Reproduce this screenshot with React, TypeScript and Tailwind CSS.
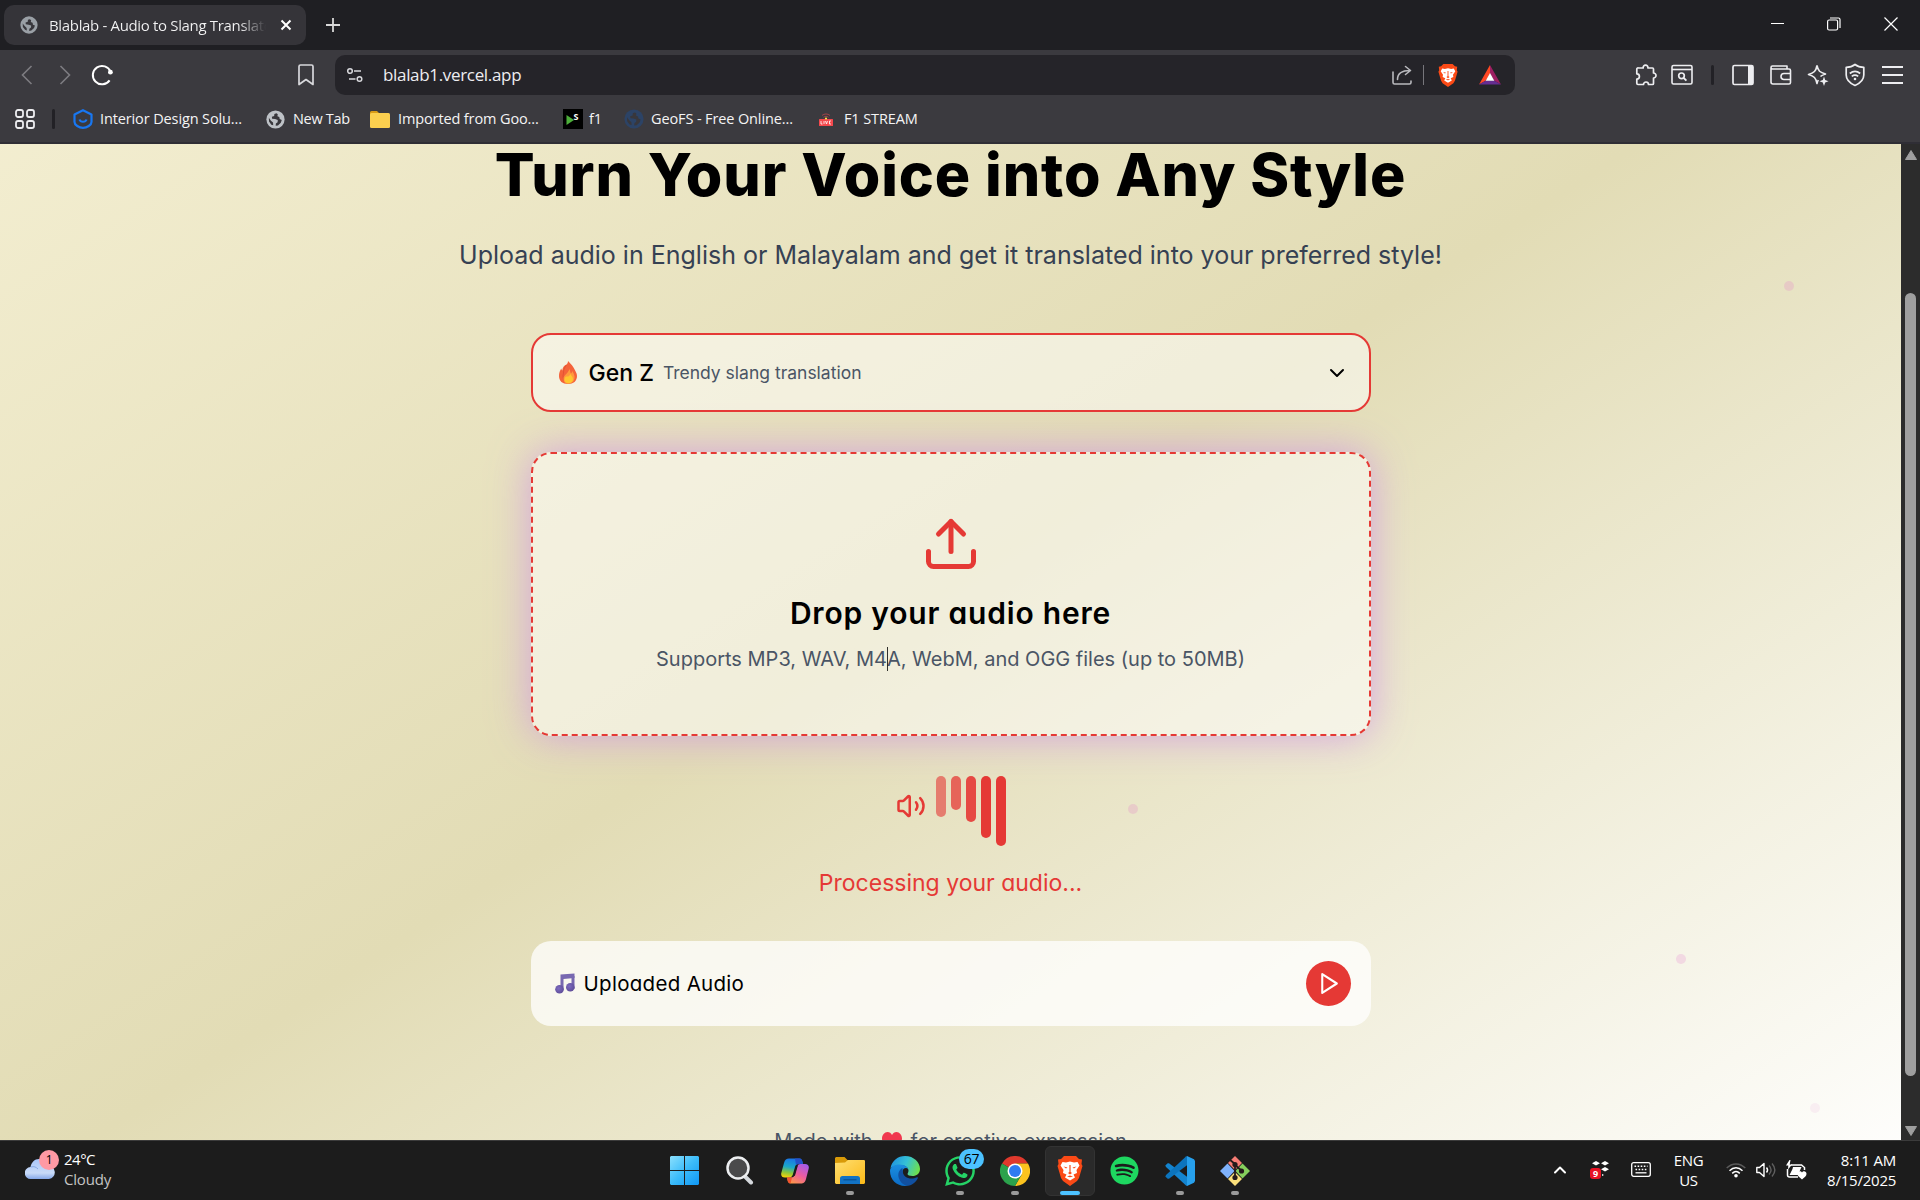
import React from 'react';
import { ChevronDown, ChevronUp, Upload, Volume2 } from 'lucide-react';
import { FaSpotify, FaWhatsapp } from 'react-icons/fa';

type IconProps = { className?: string };

const Globe = ({ className }: IconProps) => (
  <svg viewBox="0 0 20 20" className={className}>
    <circle cx="10" cy="10" r="9.6" fill="currentColor" />
    <path
      d="M11 3.5 8.8 4.2 8.6 6.4 6.2 7.2 6.4 9.2 9.6 9.6 12.4 10.6 12.2 12.8 10.4 14.2 10.2 16.6 12.6 16.2 15.6 13.4 16.6 10.6 14.4 9.6 14 7.4 12 6.6 12.4 4.6ZM3 8.2 3.2 12.2 5.6 15.4 7.6 16 7.4 13.2 5.2 11.2Z"
      fill="#38373c"
    />
  </svg>
);

const BraveLion = ({ className }: IconProps) => (
  <svg viewBox="0 0 26 30" className={className}>
    <path d="M7 0H19L22 3 25 3.500 24.500 8 25.500 10 22 22 20 25 13 30 6 25 4 22 .500 10 1.500 8 1 3.500 4 3Z" fill="#fb4a16" />
    <path d="M5.500 6 9 6.500 13 5.500 17 6.500 20.500 6 22.500 9.500 19.500 14 20 17 16.500 18.500 18 21.500 13 24.500 8 21.500 9.500 18.500 6 17 6.500 14 3.500 9.500Z" fill="#fff" />
    <path d="M6.500 10.500 10.500 11.500 9 12.500ZM19.500 10.500 15.500 11.500 17 12.500ZM12.400 9h1.200V16L15 17l-2 1.500L11 17l1.400-1ZM10 20.500l3-1 3 1-3 .800Z" fill="#fb4a16" />
  </svg>
);

const Reload = () => (
  <svg viewBox="0 0 24 24" className="size-6" fill="none" stroke="#fff" strokeWidth="2">
    <path d="M20.6 8.8A9.2 9.2 0 1 0 19.6 17.4" />
    <circle cx="20.4" cy="9.2" r="2.4" fill="#fff" stroke="none" />
  </svg>
);

const Tune = () => (
  <svg viewBox="0 0 18 18" className="size-[18px]" fill="none" stroke="#d8d8dc" strokeWidth="1.5">
    <circle cx="4" cy="5" r="2.3" />
    <path d="M8 5h7M3 13h6.5" />
    <circle cx="13.5" cy="13" r="2.3" />
  </svg>
);

const Share = () => (
  <svg viewBox="0 0 22 22" className="size-[22px]" fill="none" stroke="#b9b9bd" strokeWidth="1.6" strokeLinejoin="round" strokeLinecap="round">
    <path d="M2 8v10.5a1.5 1.5 0 0 0 1.5 1.5h15a1.5 1.5 0 0 0 1.5-1.5V17" />
    <path d="M6.5 15.5c0-5.500 4-9 12.500-9M14.500 2.500l5 4-5 4" />
  </svg>
);

const Bat = () => (
  <svg viewBox="0 0 22 20" className="h-5 w-[22px]">
    <path d="M11 0 0 19.500 7 15.500 11 8.500Z" fill="#ff4724" />
    <path d="M11 0 22 19.500 15 15.500 11 8.500Z" fill="#9e1f63" />
    <path d="M0 19.500H22L15 15.500H7Z" fill="#662d91" />
    <path d="M11 8 15.300 15.700H6.700Z" fill="#fff" />
  </svg>
);

const Puzzle = () => (
  <svg viewBox="0 0 22 22" className="size-[22px]" fill="none" stroke="#ededf0" strokeWidth="1.7" strokeLinejoin="round">
    <path d="M3.500 4H8.200a2.400 2.400 0 1 1 4.700 0H17.500a1 1 0 0 1 1 1V9a2.500 2.500 0 1 1 0 5v5.500a1 1 0 0 1-1 1H13.500a2.500 2.500 0 1 0-5 0H3a1.200 1.200 0 0 1-1.200-1.200V15a2.600 2.600 0 1 0 0-5.200V5.200A1.200 1.200 0 0 1 3.500 4Z" />
  </svg>
);

const SearchBox = () => (
  <svg viewBox="0 0 22 22" className="size-[22px]" fill="none" stroke="#ededf0" strokeWidth="1.6">
    <rect x="1" y="1.500" width="20" height="18.500" rx="1.500" />
    <path d="M1 5.500H21" />
    <circle cx="10.500" cy="11.800" r="2.800" strokeWidth="1.700" />
    <path d="m12.600 13.900 2.800 2.800" strokeWidth="1.900" />
  </svg>
);

const Wallet = () => (
  <svg viewBox="0 0 22 22" className="size-[22px]" fill="none" stroke="#ededf0" strokeWidth="1.6" strokeLinejoin="round">
    <path d="M1 4V18a2 2 0 0 0 2 2H19a1.500 1.500 0 0 0 1.500-1.500V6.500A1.500 1.500 0 0 0 19 5H2.500C.500 5 .500 2 2.500 2H17v3" />
    <path d="M21 9.500H14a2.500 2.500 0 0 0 0 6h7" />
  </svg>
);

const Sparkle = () => (
  <svg viewBox="0 0 22 22" className="size-[22px]" fill="none" stroke="#ededf0" strokeWidth="1.600" strokeLinejoin="round">
    <path d="M10 1.500C11 7 13 8.500 18.500 10 16 11 14.500 11.500 13.500 12.500M10 1.500C9 7 7 9 1.500 10.500 7 12 9 14 10 19.500c.400-1.500.800-2.500 1.300-3.500" />
    <path d="M17 12.500 18.200 16 21.500 17.200 18.200 18.400 17 22 15.800 18.400 12.500 17.200 15.800 16Z" fill="#ededf0" stroke="none" />
  </svg>
);

const ShieldWifi = () => (
  <svg viewBox="0 0 20 24" className="h-6 w-5" fill="none" stroke="#ededf0" strokeWidth="1.700" strokeLinejoin="round">
    <path d="M10 1.500C7.500 3.500 4.500 4.300 1.200 4.300V12c0 5 3.800 8.300 8.800 10.500 5-2.200 8.800-5.500 8.800-10.500V4.300C15.500 4.300 12.500 3.500 10 1.500Z" />
    <path d="M4.800 10.500c3.200-2.700 7.200-2.700 10.400 0M6.800 13.400c2-1.600 4.400-1.600 6.400 0" />
    <circle cx="10" cy="16" r="1.300" fill="#ededf0" stroke="none" />
  </svg>
);

const Fire = () => (
  <svg viewBox="0 0 18 23" className="h-[23px] w-[18px]">
    <path d="M9 0c1.500 2 3.500 3 5.500 6.500S18 12.500 18 15c0 5-3.500 8-9 8s-9-3-9-8c0-3 .800-5 2.300-7.500.200 1 .500 1.500 1 2C3.500 6 5.500 4.500 7.500 3.500 8.500 2.500 9 1.500 9 0Z" fill="#f4633a" />
    <path d="M7.500 4C5 7 4.500 9 4.500 12c-1 3-.500 7 2 9" fill="none" stroke="#d9482f" strokeWidth="1" opacity=".6" />
    <path d="M10.500 8c1 2.500.500 3.500 1.500 4.500.800-.500 1-1.500 1.200-2.500C15 13 16 15 15.500 17.500c-.500 3-3 5.200-6 5.200s-5-2-5-5c0-3.500 4-4.200 6-9.700Z" fill="#ff9a3d" />
    <path d="M11.500 13c.500 2 2.500 2.500 2.500 5 0 2.500-2 4.300-4.500 4.300S5.500 21 5.500 18.500 7 15.500 8 15.500s2 .500 3.500-2.500Z" fill="#ffc62e" />
  </svg>
);

const MusicNote = () => (
  <svg viewBox="0 0 20 21" className="h-[21px] w-5">
    <defs>
      <radialGradient id="note" cx=".4" cy=".4" r=".7">
        <stop offset="0" stopColor="#7d6bc0" />
        <stop offset="1" stopColor="#5c4a94" />
      </radialGradient>
    </defs>
    <path d="M5.500 1.500 19.500.500V5L8.500 6V16.500H5.500Z" fill="#7868b0" />
    <path d="M16.500 3h3v13h-3z" fill="#7868b0" />
    <circle cx="4.500" cy="16.300" r="4.300" fill="url(#note)" />
    <circle cx="15.300" cy="14.200" r="4.300" fill="url(#note)" />
  </svg>
);

const Cloud = () => (
  <svg viewBox="0 0 30 20" className="h-5 w-[30px]">
    <defs>
      <linearGradient id="cloud" x1="0" y1="0" x2="0" y2="1">
        <stop offset="0" stopColor="#a9c6fa" />
        <stop offset=".7" stopColor="#c9dbf8" />
        <stop offset="1" stopColor="#86a9ea" />
      </linearGradient>
    </defs>
    <path d="M6 20a6 6 0 0 1-.500-12C6.500 3.500 9.500 0 14 0c5 0 7.500 3 8.500 7a6.500 6.500 0 0 1 1.500 13Z" fill="url(#cloud)" />
    <path d="M6 8c3-1 5 0 7 2" fill="none" stroke="#86a9e6" strokeWidth="1" />
  </svg>
);

const WindowsLogo = () => (
  <svg viewBox="0 0 29 29" className="size-[29px]">
    <defs>
      <linearGradient id="win" gradientUnits="userSpaceOnUse" x1="0" y1="0" x2="29" y2="29">
        <stop offset="0" stopColor="#8be0fd" />
        <stop offset=".5" stopColor="#3cbcfa" />
        <stop offset="1" stopColor="#0f97f4" />
      </linearGradient>
    </defs>
    <path d="M0 1 1 0H14V14H0ZM15 0H28L29 1V14H15ZM0 15H14V29H1L0 28ZM15 15H29V28L28 29H15Z" fill="url(#win)" />
  </svg>
);

const SearchLogo = () => (
  <svg viewBox="0 0 28 29" className="h-[29px] w-7">
    <path d="m18.500 20 6.500 6.500" stroke="#d5d9dd" strokeWidth="4" strokeLinecap="round" />
    <circle cx="12" cy="12" r="10.500" fill="#4a4a4b" stroke="#eceef0" strokeWidth="2.500" />
  </svg>
);

const Copilot = () => (
  <svg viewBox="0 0 28 26" className="h-[26px] w-7">
    <defs>
      <linearGradient id="cpa" x1=".5" y1="0" x2=".3" y2="1">
        <stop offset="0" stopColor="#1b74e8" />
        <stop offset=".45" stopColor="#1aa7c9" />
        <stop offset=".75" stopColor="#8cc63c" />
        <stop offset="1" stopColor="#f5d20a" />
      </linearGradient>
      <linearGradient id="cpb" x1=".8" y1="0" x2=".2" y2="1">
        <stop offset="0" stopColor="#a45bea" />
        <stop offset=".5" stopColor="#ec5c9f" />
        <stop offset="1" stopColor="#ff9a44" />
      </linearGradient>
    </defs>
    <path d="M8 .500H18.500C20.500.500 21 2 21.500 4L22 6H17.500C15.500 6 14.500 7 14 9l-2 7c-.500 2-1.500 3.500-4 3.500H4C1 19.500-.300 17.500.300 15L3 5C4 1.500 5.500.500 8 .500Z" fill="url(#cpa)" />
    <path d="M14 .500h4.500C20.500.500 21 2 21.500 4L22 6h-4.500c-1 0-1.800.300-2.500 1Z" fill="#2350c9" />
    <path d="M20 25.500H10C7.500 25.500 7 24 6.500 22L6 19.500h4c2.500 0 3.500-1.500 4-3.500l2-7c.500-2 1.500-3 3.500-3H24c3 0 4.300 2 3.700 4.500L25 21c-1 3.500-2.500 4.500-5 4.500Z" fill="url(#cpb)" />
    <path d="M6 19.500h5l-1.500 6C7.500 25.500 7 24 6.500 22Z" fill="#f4532d" />
    <path d="M14.800 8 17 7l-3 10.500-3 1.500 2-4Z" fill="#1c1c1c" />
  </svg>
);

const Explorer = () => (
  <svg viewBox="0 0 30 27" className="h-[27px] w-[30px]">
    <defs>
      <linearGradient id="fold" x1="0" y1="0" x2="1" y2="1">
        <stop offset="0" stopColor="#ffdf72" />
        <stop offset="1" stopColor="#fbb917" />
      </linearGradient>
    </defs>
    <path d="M0 1 1 0H9.500L12.500 3H29l1 1v8H0Z" fill="#d99a08" />
    <path d="M0 6 10 5.500 13 3H29L30 4V26L29 27H1L0 26Z" fill="url(#fold)" />
    <path d="M5 27V21.500A2.500 2.500 0 0 1 7.500 19h15A2.500 2.500 0 0 1 25 21.500V27Z" fill="#1272c4" />
    <path d="M8.500 22.800h13" stroke="#0a4e92" strokeWidth="1.200" />
  </svg>
);

const Edge = () => (
  <svg viewBox="0 0 30 30" className="size-[30px]">
    <defs>
      <linearGradient id="eg1" x1="0" y1=".3" x2="1" y2=".6">
        <stop offset="0" stopColor="#1f93e0" />
        <stop offset=".5" stopColor="#35c1d6" />
        <stop offset="1" stopColor="#6fe04a" />
      </linearGradient>
      <linearGradient id="eg2" x1="0" y1="0" x2="0" y2="1">
        <stop offset="0" stopColor="#1b8fe0" />
        <stop offset="1" stopColor="#0b6bc6" />
      </linearGradient>
    </defs>
    <path d="M.500 12C2 4.500 8 0 15 0c9 0 15 6.500 15 13 0 4.500-3.500 7-7.500 7-3 0-5-1-5-2 0-.800 1-1.500 1-3.500 0-3-3.500-5.500-8-5.500-4 0-8 1.500-10 3Z" fill="url(#eg1)" />
    <path d="M0 15C0 11 4 8.500 9.500 8.500c5.500 0 9 3 9 6 0-1.500-1-2.500-2.500-2.500-2 0-3.500 1.500-3.500 4 0 5.500 3.500 9.500 8 10.800C19 29 17 30 15 30 6.500 30 0 23.500 0 15Z" fill="url(#eg2)" />
    <path d="M12.500 12c-4 2-5 6.500-3.500 10.500 1.500 4.500 5.500 7 9 7.300 4-.600 8-3.600 9.800-7.600.300-.800-.300-1.200-.800-.900-4 2-9 1.500-11.500-.500-2.300-1.800-3.200-5-3-8.800Z" fill="#1150a0" />
  </svg>
);

const Chrome = () => (
  <svg viewBox="0 0 30 30" className="size-[30px]">
    <path d="M15 15 2 7.500A15 15 0 0 1 28 7.500H15Z" fill="#e0392d" />
    <path d="M15 7.500H28A15 15 0 0 1 15 30L21.500 18.700Z" fill="#fcc31e" />
    <path d="M2 7.500A15 15 0 0 0 15 30l6.500-11.300L15 15Z" fill="#2ba24c" />
    <circle cx="15" cy="15" r="7.500" fill="#fff" />
    <circle cx="15" cy="15" r="6" fill="#2f7bf2" />
  </svg>
);

const VSCode = () => (
  <svg viewBox="0 0 30 30" className="size-[30px]">
    <path d="M22 30 21 29.500 1 11 .300 9.500 2.700 7.300 4 7.300 23 21.500Z" fill="#1484cf" />
    <path d="M22 0 21 .500 1 19 .300 20.500 2.700 22.700 4 22.700 23 8.500Z" fill="#0c74bd" />
    <path d="M22 0 29 3.300 30 5V25L29 26.700 22 30V8Z" fill="#27a0ec" />
  </svg>
);

const Git = () => (
  <svg viewBox="0 0 30 30" className="size-[30px]">
    <path d="m15 0 7 7-7 7-7-7Z" fill="#f77d75" />
    <path d="m7.500 7.500 7 7.500-7 7.500L0 15Z" fill="#7fb2fb" />
    <path d="M22.500 7.500 30 15l-7.500 7.500-7-7.500Z" fill="#86cf5c" />
    <path d="m15 16 7 7-7 7-7-7Z" fill="#fbe07b" />
    <path d="M15 8V21M15 9 22 15M9.500 3.500 15 8" stroke="#241a1a" strokeWidth="1.800" />
    <g fill="#241a1a">
      <circle cx="15" cy="8.500" r="2.600" />
      <circle cx="21.500" cy="15" r="2.600" />
      <circle cx="15" cy="21.500" r="2.600" />
    </g>
  </svg>
);

const TaskItem = ({ children, running }: { children: React.ReactNode; running?: boolean }) => (
  <div className="relative flex h-[50px] w-[55px] items-center justify-center">
    {children}
    {running && <span className="absolute bottom-[1px] left-[23.500px] h-1 w-2 rounded-full bg-[#9a9a9a]" />}
  </div>
);

const barStyles = [
  'h-[41px] opacity-60',
  'h-[34px] opacity-75',
  'h-[46px] opacity-90',
  'h-[62px]',
  'h-[70px]',
];

function BrowserChrome() {
  return (
    <header className="h-36 shrink-0 border-b-2 border-[#2f2e35] bg-[#3b3a3f] text-[#f4f4f5]">
      <div className="flex h-[50px] items-start bg-[#1f1f23] pt-[5px] pl-1">
        <div className="flex h-10 w-[302px] items-center rounded-[10px] bg-[#353439] pl-4">
          <Globe className="size-[18px] text-[#9aa0a6]" />
          <span className="ml-[11px] w-[217px] overflow-hidden bg-linear-to-r from-[#f4f4f5] from-88% to-[#353439] bg-clip-text text-[15px] leading-6 tracking-[-0.34px] whitespace-nowrap text-transparent">
            Blablab - Audio to Slang Translator
          </span>
          <svg viewBox="0 0 12 12" className="ml-[14px] size-3" stroke="#fff" strokeWidth="2">
            <path d="m1.500 1.500 9 9M10.500 1.500l-9 9" />
          </svg>
        </div>
        <svg viewBox="0 0 14 14" className="mt-[13px] ml-5 size-[14px]" stroke="#d8d8d8" strokeWidth="1.800">
          <path d="M7 0V14M0 7H14" />
        </svg>
        <div className="mt-3 mr-[22px] ml-auto flex items-center gap-[43px]">
          <svg viewBox="0 0 14 14" className="size-[14px]" stroke="#fff" strokeWidth="1">
            <path d="M1 6.500H14" />
          </svg>
          <svg viewBox="0 0 14 14" className="size-[14px]" fill="none" stroke="#fff" strokeWidth="1.200">
            <rect x=".6" y="3" width="10" height="10" rx="1.500" />
            <path d="M3 1H11.500A1.500 1.500 0 0 1 13 2.500V11" />
          </svg>
          <svg viewBox="0 0 14 14" className="size-[14px]" stroke="#fff" strokeWidth="1.200">
            <path d="m.500.500 13 13M13.500.500l-13 13" />
          </svg>
        </div>
      </div>

      <div className="flex h-[50px] items-center pl-[21px]">
        <svg viewBox="0 0 12 20" className="h-5 w-3" fill="none" stroke="#7d7c81" strokeWidth="1.600">
          <path d="m10.500 1-9 9 9 9" />
        </svg>
        <svg viewBox="0 0 12 20" className="ml-[26px] h-5 w-3" fill="none" stroke="#7d7c81" strokeWidth="1.600">
          <path d="m1.500 1 9 9-9 9" />
        </svg>
        <div className="ml-[19px]">
          <Reload />
        </div>
        <svg viewBox="0 0 16 22" className="ml-[184px] h-[22px] w-4" fill="none" stroke="#d8d8dc" strokeWidth="1.700" strokeLinejoin="round">
          <path d="M1 2.500A1.500 1.500 0 0 1 2.500 1h11A1.500 1.500 0 0 1 15 2.500V20.500L8 15.500 1 20.500Z" />
        </svg>
        <div className="ml-[21px] flex h-10 w-[1180px] items-center rounded-[10px] bg-[#252429] pl-[11px]">
          <Tune />
          <span className="ml-[19px] text-[17px] tracking-[-0.33px] text-[#ededf0]">blalab1.vercel.app</span>
          <div className="mr-[14px] ml-auto flex items-center">
            <Share />
            <span className="ml-[10px] h-5 w-px bg-[#77767b]" />
            <BraveLion className="ml-[14px] h-[23px] w-5" />
            <span className="ml-[21px]">
              <Bat />
            </span>
          </div>
        </div>
        <div className="ml-[120px] flex items-center">
          <Puzzle />
          <div className="ml-[14px]">
            <SearchBox />
          </div>
          <span className="ml-[18px] h-5 w-[3px] rounded bg-[#222126]" />
          <svg viewBox="0 0 22 22" className="ml-[18px] size-[22px]" fill="none" stroke="#ededf0" strokeWidth="1.700">
            <rect x="1" y="1.500" width="20" height="19" rx="1.500" />
            <path d="M16 2H21V20H16Z" fill="#ededf0" stroke="none" />
          </svg>
          <div className="ml-4">
            <Wallet />
          </div>
          <div className="ml-[15px]">
            <Sparkle />
          </div>
          <div className="ml-4">
            <ShieldWifi />
          </div>
          <svg viewBox="0 0 21 18" className="ml-[17px] h-[18px] w-[21px]" stroke="#ededf0" strokeWidth="2">
            <path d="M0 1H21M0 9H21M0 17H21" />
          </svg>
        </div>
      </div>

      <div className="flex h-[38px] items-center pl-[15px] text-[14.500px] tracking-[-0.12px] whitespace-nowrap">
        <svg viewBox="0 0 20 20" className="size-5" fill="none" stroke="#ededf0" strokeWidth="1.800">
          <rect x="1" y="1" width="7" height="7" rx="2" />
          <rect x="12" y="1" width="7" height="7" rx="2" />
          <rect x="1" y="12" width="7" height="7" rx="2" />
          <rect x="12" y="12" width="7" height="7" rx="2" />
        </svg>
        <span className="ml-[17px] h-5 w-[3px] rounded bg-[#222126]" />
        <div className="ml-[18px] flex w-[193px] items-center gap-[7px]">
          <svg viewBox="0 0 20 20" className="size-5" fill="none" stroke="#1877f2" strokeWidth="2.200" strokeLinejoin="round">
            <path d="M10 1.200 18.500 5.500V13C18.500 16 14 18.800 10 18.800S1.500 16 1.500 13V5.500Z" />
            <path d="M6.500 10.500c1 3 6 3 7 0" />
          </svg>
          <span>Interior Design Solu...</span>
        </div>
        <div className="flex w-[104px] items-center gap-2">
          <Globe className="size-[19px] text-[#bdc1c6]" />
          <span className="tracking-[-0.3px]">New Tab</span>
        </div>
        <div className="flex w-[193px] items-center gap-2">
          <svg viewBox="0 0 20 17" className="h-[17px] w-5">
            <path d="M0 1.500A1.500 1.500 0 0 1 1.500 0H7l2.500 2.500V6H0Z" fill="#d99b16" />
            <rect y="2" width="20" height="15" rx="1.500" fill="#fbcf4f" />
          </svg>
          <span>Imported from Goo...</span>
        </div>
        <div className="flex w-[61px] items-center gap-[6px]">
          <span className="relative flex size-5 items-center justify-center bg-black">
            <svg viewBox="0 0 20 20" className="absolute size-5">
              <path d="M3.500 6 11 11 3.500 16Z" fill="#4caf3a" />
            </svg>
            <b className="relative -top-[3px] left-[3px] text-[9px] leading-none text-white">S</b>
          </span>
          <span>f1</span>
        </div>
        <div className="flex w-[195px] items-center gap-[7px]">
          <Globe className="size-5 text-[#2c4366]" />
          <span>GeoFS - Free Online...</span>
        </div>
        <div className="flex items-center gap-[11px]">
          <svg viewBox="0 0 14 13" className="h-[13px] w-[14px]" fill="none" stroke="#a34347" strokeWidth="1">
            <path d="M3 2.500c2.500-2 5.500-2 8 0M4.500 4.300c1.500-1.300 3.500-1.300 5 0" />
            <rect x="0" y="6" width="14" height="7" rx=".5" fill="#f4484d" stroke="none" />
            <path d="M2 8v3h1.500M5 8v3M6.500 8l1 3 1-3M12 8h-1.500v3H12" stroke="#fff" strokeWidth=".8" />
            <circle cx="7" cy="5.500" r="1.100" fill="#ffe14a" stroke="none" />
          </svg>
          <span>F1 STREAM</span>
        </div>
      </div>
    </header>
  );
}

function Page() {
  return (
    <div className="relative h-[996px] w-[1901px] overflow-hidden font-['Inter',sans-serif]">
      <div className="absolute -top-[168px] left-0 h-[1222px] w-full bg-linear-to-br from-[#f5f0d4] via-[#e2dcb5] to-white" />
      <span className="absolute top-[137px] left-[1784px] size-[10px] rounded-full bg-[#e5a5c8] opacity-40" />
      <span className="absolute top-[660px] left-[1128px] size-[10px] rounded-full bg-[#e5a5c8] opacity-40" />
      <span className="absolute top-[810px] left-[1676px] size-[10px] rounded-full bg-[#eaa5d8] opacity-35" />
      <span className="absolute top-[959px] left-[1810px] size-[10px] rounded-full bg-[#eaa5d8] opacity-15" />
      <main className="relative flex flex-col items-center whitespace-nowrap">
        <h1 className="mt-[1px] text-[59px] leading-[60px] font-extrabold tracking-[0.93px] text-black [font-feature-settings:'cv11']">
          Turn Your Voice into Any Style
        </h1>
        <p className="mt-[32px] text-[25px] leading-9 text-[#364153]">
          Upload audio in English or Malayalam and get it translated into your preferred style!
        </p>
        <div className="mt-[60px] flex h-[79px] w-[840px] items-center rounded-[20px] border-2 border-[#e53935] bg-white/50 pr-5 pl-[26px]">
          <Fire />
          <span className="ml-3 text-[23px] leading-8 font-medium text-black">Gen Z</span>
          <span className="ml-[9px] text-[17.5px] leading-8 text-[#4a5565]">Trendy slang translation</span>
          <ChevronDown className="ml-auto size-6 text-black" />
        </div>
        <div className="mt-10 flex h-[284px] w-[840px] flex-col items-center rounded-[20px] border-2 border-dashed border-[#e53935] bg-white/50 pt-[60px] shadow-[0_0_40px_rgba(205,140,230,0.75)]">
          <Upload className="size-[60px] text-[#e53935]" />
          <h2 className="mt-[17px] text-[30px] leading-[45px] font-semibold tracking-[0.8px] text-black [font-feature-settings:'cv11']">
            Drop your audio here
          </h2>
          <p className="relative mt-2 text-[20px] leading-[30px] text-[#4a5565]">
            Supports MP3, WAV, M4A, WebM, and OGG files (up to 50MB)
            <span className="absolute top-[3px] left-[231px] h-6 w-px bg-black/80" />
          </p>
        </div>
        <div className="mt-10 flex h-[60px] w-[109px] items-center gap-[10px]">
          <Volume2 className="size-[30px] shrink-0 text-[#e53935]" />
          <div className="flex h-[60px] items-start gap-[5px]">
            {barStyles.map((style) => (
              <span key={style} className={`w-[10px] rounded-full bg-[#e53935] ${style}`} />
            ))}
          </div>
        </div>
        <p className="mt-[29px] text-[23px] leading-9 text-[#e53935] [font-feature-settings:'cv11']">Processing your audio...</p>
        <div className="mt-10 flex h-[85px] w-[840px] items-center rounded-[20px] bg-white/75 pr-5 pl-6">
          <MusicNote />
          <span className="ml-[9px] text-[20.5px] leading-[30px] tracking-[0.3px] text-black [font-feature-settings:'cv11']">Uploaded Audio</span>
          <button className="ml-auto flex size-[45px] items-center justify-center rounded-full bg-[#e53935]">
            <svg viewBox="0 0 24 24" className="size-[25px]" fill="none" stroke="#fff" strokeWidth="2" strokeLinejoin="round">
              <path d="M6 3 20 12 6 21Z" />
            </svg>
          </button>
        </div>
        <footer className="mt-[101px] flex items-center text-[20px] leading-7 text-[#4a5565]">
          <span>Made with</span>
          <svg viewBox="0 0 20 19" className="mx-[9px] h-[19px] w-5">
            <path d="M10 19C3 14 0 10.500 0 6.500 0 3 2.500 0 5.500 0 7.500 0 9 1 10 3c1-2 2.500-3 4.500-3C17.500 0 20 3 20 6.500 20 10.500 17 14 10 19Z" fill="#f0384f" />
          </svg>
          <span>for creative expression</span>
        </footer>
      </main>
    </div>
  );
}

function Taskbar() {
  return (
    <footer className="flex h-[60px] shrink-0 items-center border-t border-[#3b3b3b] bg-[#1c1c1c] text-[15px] leading-5 tracking-[-0.2px] whitespace-nowrap text-white">
      <div className="flex w-[657px] items-center pl-[25px]">
        <div className="relative -mt-[3px]">
          <Cloud />
          <span className="absolute -top-[9px] left-[14px] flex size-5 items-center justify-center rounded-full bg-[#ff99a4] text-[12px] text-black">
            1
          </span>
        </div>
        <div className="-mt-[3px] ml-[9px]">
          <div className="tracking-[-0.5px]">24°C</div>
          <div className="text-[#c4c4c4]">Cloudy</div>
        </div>
      </div>
      <TaskItem><WindowsLogo /></TaskItem>
      <TaskItem><SearchLogo /></TaskItem>
      <TaskItem><Copilot /></TaskItem>
      <TaskItem running><Explorer /></TaskItem>
      <TaskItem><Edge /></TaskItem>
      <TaskItem running>
        <FaWhatsapp className="size-[34px] text-[#25d366]" />
        <span className="absolute top-[3px] left-[27px] flex h-5 w-[25px] items-center justify-center rounded-full bg-[#4cc2ff] text-[14px] text-black">
          67
        </span>
      </TaskItem>
      <TaskItem running><Chrome /></TaskItem>
      <div className="relative mx-[2.500px] flex size-[50px] items-center justify-center rounded-[6px] border border-[#333] bg-[#2a2a2a]">
        <BraveLion className="h-[30px] w-[26px]" />
        <span className="absolute bottom-0 left-[14px] h-1 w-5 rounded-full bg-[#4cc2ff]" />
      </div>
      <TaskItem><FaSpotify className="size-[29px] text-[#1ed760]" /></TaskItem>
      <TaskItem running><VSCode /></TaskItem>
      <TaskItem running><Git /></TaskItem>

      <div className="-mt-[2px] mr-6 ml-auto flex items-center">
        <ChevronUp className="size-5" strokeWidth={2.4} />
        <svg viewBox="0 0 20 18" className="ml-[20px] h-[18px] w-5">
          <path d="M6 0 10 2.300 6 4.600 2 2.300ZM15 0 19 2.300 15 4.600 11 2.300ZM15 6 19 8.300 15 10.600 11 8.300ZM12 13l2 1-2 1Z" fill="#fff" />
          <rect x="0" y="7" width="11" height="11" rx="3" fill="#e81123" />
          <text x="5.500" y="15.800" fontSize="9" fontWeight="700" textAnchor="middle" fill="#fff">9</text>
        </svg>
        <svg viewBox="0 0 20 15" className="ml-[21px] h-[15px] w-5" fill="none" stroke="#fff" strokeWidth="1.300">
          <rect x=".7" y=".7" width="18.600" height="13.600" rx="2" />
          <path d="M3.500 4.300h13M4.500 7.400h11" strokeDasharray="1.600 1.500" strokeWidth="1.500" />
          <path d="M4.500 10.800h11" />
        </svg>
        <div className="ml-[22px] w-[31px] text-center tracking-[-0.4px]">
          <div>ENG</div>
          <div>US</div>
        </div>
        <svg viewBox="0 0 20 16" className="ml-[22px] h-4 w-5" fill="none" stroke="#fff" strokeWidth="1.500">
          <path d="M.700 6c5.500-5.500 13-5.500 18.600 0" stroke="#5a5a5a" />
          <path d="M3.500 8.700c4-4 9-4 13 0M6.200 11.400c2.400-2.300 5.200-2.300 7.600 0" />
          <circle cx="10" cy="13.800" r="1.800" fill="#fff" stroke="none" />
        </svg>
        <svg viewBox="0 0 20 16" className="ml-[10px] h-4 w-5" fill="none" stroke="#fff" strokeWidth="1.400" strokeLinejoin="round">
          <path d="M.800 5.500H3.500L8 1.500V14.500L3.500 10.500H.800Z" />
          <path d="M10.500 5.500c1.300 1.500 1.300 3.500 0 5" />
          <path d="M13 3.500c2.500 2.700 2.500 6.300 0 9M16 1.500c3.500 4 3.500 9 0 13" stroke="#5f5f5f" />
        </svg>
        <svg viewBox="0 0 21 20" className="ml-[10px] h-5 w-[21px]">
          <path d="M5 5H15.500L18.500 7.500V10M1.500 9v6a2 2 0 0 0 2 2H12" fill="none" stroke="#fff" strokeWidth="1.500" />
          <path d="M7 7h8.500l-3.500 8H3.500L6.500 9ZM3.500 0 0 5.500H2.300L2 9.500 6 4.500H3.700L4.500 0Z" fill="#fff" />
          <path d="M16 19.500c-3-2.300-4.500-3.700-4.500-5.700 0-3 3.500-3.300 4.500-1.300 1-2 4.500-1.700 4.500 1.300 0 2-1.500 3.400-4.500 5.700Z" fill="#fff" />
        </svg>
        <div className="ml-5 w-[69px] text-right">
          <div>8:11 AM</div>
          <div>8/15/2025</div>
        </div>
      </div>
    </footer>
  );
}

export default function App() {
  return (
    <div className="flex h-[1200px] w-[1920px] flex-col overflow-hidden bg-[#1c1c1c] font-['Open_Sans','Noto_Sans',sans-serif]">
      <BrowserChrome />
      <div className="flex h-[996px]">
        <Page />
        <div className="flex w-[19px] flex-col items-center bg-[#2c2c2c] py-[6px]">
          <svg viewBox="0 0 12 10" className="h-[10px] w-3">
            <path d="M6 .500 11.500 9.500H.500Z" fill="#9f9f9f" stroke="#9f9f9f" strokeLinejoin="round" />
          </svg>
          <div className="mt-[133px] h-[783px] w-[11px] rounded-full bg-[#9f9f9f]" />
          <svg viewBox="0 0 12 10" className="mt-auto mb-[-2px] h-[10px] w-3">
            <path d="M6 9.500 11.500.500H.500Z" fill="#9f9f9f" stroke="#9f9f9f" strokeLinejoin="round" />
          </svg>
        </div>
      </div>
      <Taskbar />
    </div>
  );
}
